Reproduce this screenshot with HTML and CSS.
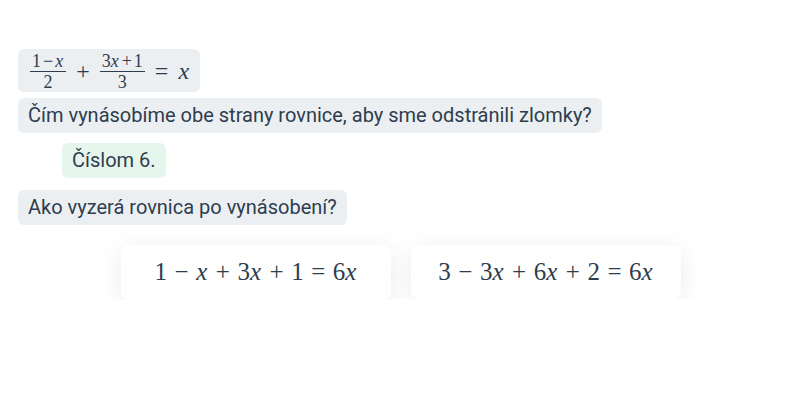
FILE: index.html
```html
<!DOCTYPE html>
<html lang="sk">
<head>
    <meta charset="UTF-8">
    <meta name="viewport" content="width=device-width, initial-scale=1.0">
    <title>Rovnica</title>
    <link rel="stylesheet" href="styles.css">
</head>
<body>
    <div class="chat">
        <div class="bubble math-bubble">
            <span class="math">
                <span class="frac"><span class="num">1<span class="op">−</span><i>x</i></span><span class="den">2</span></span>
                <span class="op-big">+</span>
                <span class="frac"><span class="num">3<i>x</i><span class="op">+</span>1</span><span class="den">3</span></span>
                <span class="op-big">=</span>
                <i>x</i>
            </span>
        </div>

        <div class="bubble question">Čím vynásobíme obe strany rovnice, aby sme odstránili zlomky?</div>

        <div class="bubble answer">Číslom 6.</div>

        <div class="bubble question next">Ako vyzerá rovnica po vynásobení?</div>

        <div class="options">
            <div class="option">
                <span class="math">1<span class="op-big">−</span><i>x</i><span class="op-big">+</span>3<i>x</i><span class="op-big">+</span>1<span class="op-big">=</span>6<i>x</i></span>
            </div>
            <div class="option">
                <span class="math">3<span class="op-big">−</span>3<i>x</i><span class="op-big">+</span>6<i>x</i><span class="op-big">+</span>2<span class="op-big">=</span>6<i>x</i></span>
            </div>
        </div>
    </div>
</body>
</html>
```

FILE: styles.css
```css
body {
    font-family: Roboto, "Noto Sans", sans-serif;
    margin: 0;
    background-color: #fff;
    color: #2e3d4e;
}

.chat {
    display: flex;
    flex-direction: column;
    align-items: flex-start;
    padding: 49px 18px 0 18px;
}

.bubble {
    background-color: #eceff1;
    border-radius: 6px;
    padding: 6px 10px;
    font-size: 20px;
    line-height: 23px;
}

.math-bubble {
    padding: 4px 10px 3px 12px;
    height: 36px;
    display: flex;
    align-items: center;
}

.question {
    margin-top: 6px;
}

.question.next {
    margin-top: 12px;
}

.answer {
    margin-top: 10px;
    margin-left: 44px;
    background-color: #e6f6ec;
}

.math {
    font-family: "Liberation Serif", "Times New Roman", serif;
    font-size: 25px;
    display: inline-flex;
    align-items: center;
    white-space: nowrap;
}

.math-bubble .math {
    font-size: 24px;
}

.math i {
    font-style: italic;
    margin-right: 1px;
}

.frac {
    display: inline-flex;
    flex-direction: column;
    align-items: center;
    font-size: 18px;
    line-height: 16px;
}

.frac .num {
    border-bottom: 1px solid #2e3d4e;
    padding: 0 2px 2px 2px;
}

.frac .den {
    padding-top: 2px;
}

.op {
    margin: 0 2px;
}

.op-big {
    margin: 0 7.5px;
}

.math-bubble .op-big {
    margin: 0 10px;
}

.options {
    align-self: stretch;
    display: flex;
    justify-content: center;
    gap: 20px;
    margin-top: 20px;
    padding-left: 2px;
}

.option {
    width: 270px;
    height: 54px;
    background-color: #fff;
    border-radius: 8px;
    box-shadow: 0 4px 24px rgba(0, 0, 0, 0.08);
    display: flex;
    justify-content: center;
    align-items: center;
}
```
